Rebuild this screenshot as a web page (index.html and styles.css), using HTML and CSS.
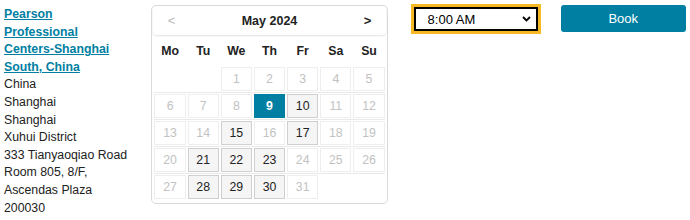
FILE: index.html
```html
<!DOCTYPE html>
<html lang="en">
<head>
    <meta charset="UTF-8">
    <meta name="viewport" content="width=device-width, initial-scale=1.0">
    <title>Book an Appointment</title>
    <link rel="stylesheet" href="styles.css">
</head>
<body>
    <div class="booking-row">
        <div class="center-info">
            <a class="center-name" href="#">Pearson Professional Centers-Shanghai South, China</a>
            <div class="center-address">
                China<br>
                Shanghai<br>
                Shanghai<br>
                Xuhui District<br>
                333 Tianyaoqiao Road<br>
                Room 805, 8/F,<br>
                Ascendas Plaza<br>
                200030
            </div>
        </div>

        <div class="calendar">
            <div class="cal-header">
                <button class="cal-nav prev" type="button">&lt;</button>
                <span class="cal-title">May 2024</span>
                <button class="cal-nav next" type="button">&gt;</button>
            </div>
            <div class="cal-weekdays">
                <span>Mo</span><span>Tu</span><span>We</span><span>Th</span><span>Fr</span><span>Sa</span><span>Su</span>
            </div>
            <div class="cal-week">
                <span class="day empty"></span>
                <span class="day empty"></span>
                <span class="day">1</span>
                <span class="day">2</span>
                <span class="day">3</span>
                <span class="day">4</span>
                <span class="day">5</span>
            </div>
            <div class="cal-week">
                <span class="day">6</span>
                <span class="day">7</span>
                <span class="day">8</span>
                <span class="day selected">9</span>
                <span class="day available">10</span>
                <span class="day">11</span>
                <span class="day">12</span>
            </div>
            <div class="cal-week">
                <span class="day">13</span>
                <span class="day">14</span>
                <span class="day available">15</span>
                <span class="day">16</span>
                <span class="day available">17</span>
                <span class="day">18</span>
                <span class="day">19</span>
            </div>
            <div class="cal-week">
                <span class="day">20</span>
                <span class="day available">21</span>
                <span class="day available">22</span>
                <span class="day available">23</span>
                <span class="day">24</span>
                <span class="day">25</span>
                <span class="day">26</span>
            </div>
            <div class="cal-week">
                <span class="day">27</span>
                <span class="day available">28</span>
                <span class="day available">29</span>
                <span class="day available">30</span>
                <span class="day">31</span>
                <span class="day empty"></span>
                <span class="day empty"></span>
            </div>
        </div>

        <div class="time-select-wrap">
            <select class="time-select">
                <option>8:00 AM</option>
                <option>8:30 AM</option>
                <option>9:00 AM</option>
            </select>
            <svg class="select-arrow" width="9" height="6" viewBox="0 0 9 6">
                <polyline points="1,1 4.5,4.5 8,1" fill="none" stroke="#000" stroke-width="1.8"/>
            </svg>
        </div>

        <button class="book-button" type="button">Book</button>
    </div>
</body>
</html>
```

FILE: styles.css
```css
* {
    margin: 0;
    padding: 0;
    box-sizing: border-box;
}

body {
    font-family: 'Liberation Sans', Arial, sans-serif;
    font-size: 12.3px;
    color: #222;
    background: white;
    padding: 4px;
}

.booking-row {
    display: flex;
    align-items: flex-start;
}

/* Test center column */
.center-info {
    width: 125px;
    margin-top: 2px;
    line-height: 17.6px;
}

.center-name {
    color: #007fa3;
    font-weight: bold;
    text-decoration: underline;
}

.center-address {
    color: #222;
}

/* Calendar */
.calendar {
    width: 239px;
    margin-left: 24px;
    margin-top: 1px;
    padding: 0 0 4px;
    border: 1px solid #dadada;
    border-radius: 5px;
}

.cal-header {
    height: 29px;
    margin: 0 1px;
    display: flex;
    align-items: center;
    justify-content: space-between;
    padding: 0 10px;
    border-radius: 4px;
    box-shadow: 0 1px 2px rgba(0,0,0,0.12);
}

.cal-title {
    font-weight: bold;
    font-size: 12.5px;
    color: #222;
}

.cal-nav {
    background: none;
    border: none;
    font-family: inherit;
    font-size: 13px;
    width: 16px;
    cursor: pointer;
}

.cal-nav.prev {
    color: #bbb;
}

.cal-nav.next {
    color: #222;
    font-weight: bold;
}

.cal-weekdays,
.cal-week {
    display: grid;
    grid-template-columns: repeat(7, 1fr);
    column-gap: 2px;
    margin: 0 2px;
}

.cal-weekdays {
    height: 32px;
    align-items: center;
    text-align: center;
    font-weight: bold;
}

.cal-week + .cal-week {
    border-top: 1px solid #e9e9e9;
    margin-top: 1px;
    padding-top: 1px;
}

.day {
    height: 24px;
    line-height: 22px;
    text-align: center;
    border: 1px solid #eee;
    color: #c2c2c2;
}

.day.empty {
    border-color: transparent;
}

.day.available {
    background: #f5f5f5;
    border-color: #cfcfcf;
    color: #222;
}

.day.selected {
    background: #007fa3;
    border-color: #007fa3;
    color: white;
    font-weight: bold;
}

/* Time picker */
.time-select-wrap {
    position: relative;
    margin-left: 26px;
    margin-top: 3px;
}

.time-select {
    appearance: none;
    width: 124px;
    height: 24px;
    border: 2px solid #000;
    outline: 3px solid #f6b923;
    border-radius: 0;
    background: white;
    font-family: inherit;
    font-size: 13px;
    color: #000;
    padding-left: 12px;
}

.select-arrow {
    position: absolute;
    right: 7px;
    top: 9px;
    pointer-events: none;
}

.book-button {
    width: 127px;
    height: 27px;
    margin-left: 23px;
    margin-top: 1px;
    background: #007fa3;
    color: white;
    border: none;
    border-radius: 3px;
    font-family: inherit;
    font-size: 13px;
    cursor: pointer;
}
```
